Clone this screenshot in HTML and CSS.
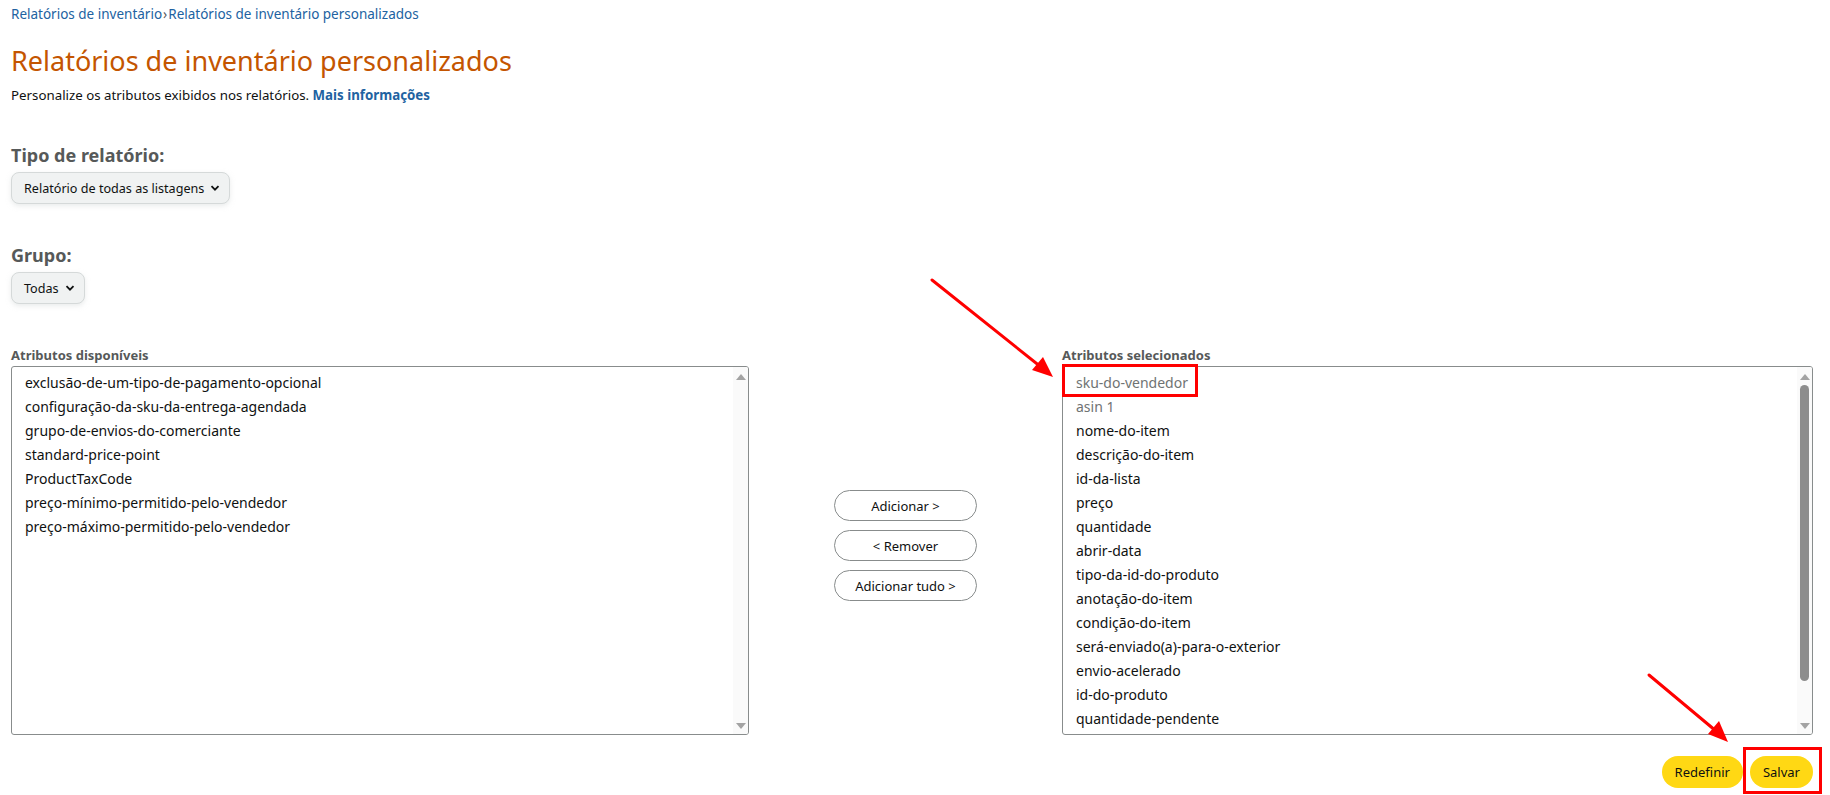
FILE: index.html
```html
<!DOCTYPE html>
<html lang="pt-BR">
<head>
<meta charset="utf-8">
<title>Relatórios de inventário personalizados</title>
<link rel="stylesheet" href="styles.css">
</head>
<body>
<div class="page">
  <nav class="crumbs"><a href="#">Relatórios de inventário</a><span class="sep">›</span><a href="#">Relatórios de inventário personalizados</a></nav>
  <h1 class="title">Relatórios de inventário personalizados</h1>
  <p class="intro">Personalize os atributos exibidos nos relatórios. <a href="#" class="more">Mais informações</a></p>

  <section class="field field-type">
    <h2 class="field-label">Tipo de relatório:</h2>
    <div class="select select-wide"><span>Relatório de todas as listagens</span><svg class="chev" viewBox="0 0 10 10"><path d="M1.5 3.2 L5 6.7 L8.5 3.2" fill="none" stroke="#0f1111" stroke-width="1.8"/></svg></div>
  </section>

  <section class="field field-group">
    <h2 class="field-label">Grupo:</h2>
    <div class="select"><span>Todas</span><svg class="chev" viewBox="0 0 10 10"><path d="M1.5 3.2 L5 6.7 L8.5 3.2" fill="none" stroke="#0f1111" stroke-width="1.8"/></svg></div>
  </section>

  <div class="lists">
    <div class="col">
      <div class="list-label">Atributos disponíveis</div>
      <div class="listbox">
        <ul class="items">
          <li>exclusão-de-um-tipo-de-pagamento-opcional</li>
          <li>configuração-da-sku-da-entrega-agendada</li>
          <li>grupo-de-envios-do-comerciante</li>
          <li>standard-price-point</li>
          <li>ProductTaxCode</li>
          <li>preço-mínimo-permitido-pelo-vendedor</li>
          <li>preço-máximo-permitido-pelo-vendedor</li>
        </ul>
        <div class="sbar">
          <span class="arr up"></span>
          <span class="track"></span>
          <span class="arr down"></span>
        </div>
      </div>
    </div>

    <div class="moves">
      <button class="move">Adicionar &gt;</button>
      <button class="move">&lt; Remover</button>
      <button class="move">Adicionar tudo &gt;</button>
    </div>

    <div class="col">
      <div class="list-label">Atributos selecionados</div>
      <div class="listbox">
        <ul class="items">
          <li class="fixed">sku-do-vendedor</li>
          <li class="fixed">asin 1</li>
          <li>nome-do-item</li>
          <li>descrição-do-item</li>
          <li>id-da-lista</li>
          <li>preço</li>
          <li>quantidade</li>
          <li>abrir-data</li>
          <li>tipo-da-id-do-produto</li>
          <li>anotação-do-item</li>
          <li>condição-do-item</li>
          <li>será-enviado(a)-para-o-exterior</li>
          <li>envio-acelerado</li>
          <li>id-do-produto</li>
          <li>quantidade-pendente</li>
        </ul>
        <div class="sbar">
          <span class="arr up"></span>
          <span class="track"><span class="thumb"></span></span>
          <span class="arr down"></span>
        </div>
      </div>
    </div>
  </div>

  <div class="actions">
    <button class="pill">Redefinir</button>
    <button class="pill">Salvar</button>
  </div>
</div>

<div class="mark mark-sku"></div>
<div class="mark mark-save"></div>
<svg class="arrows" width="1830" height="795" viewBox="0 0 1830 795">
  <g stroke="#f00" stroke-width="3" stroke-linecap="round" fill="none">
    <line x1="932" y1="280" x2="1046" y2="371"/>
    <line x1="1649" y1="675" x2="1722" y2="736"/>
  </g>
  <g fill="#f00">
    <polygon points="1053,377 1032,370 1043,357"/>
    <polygon points="1728,742 1708,734 1719,721"/>
  </g>
</svg>
</body>
</html>
```

FILE: styles.css
```css
* { box-sizing: border-box; }
html, body { margin: 0; padding: 0; background: #fff; }
body {
  font-family: "Noto Sans", "Liberation Sans", Arial, sans-serif;
  color: #0f1111;
  font-size: 13px;
  width: 1830px;
  height: 795px;
  overflow: hidden;
  position: relative;
}
a { color: #2162a1; text-decoration: none; }

.page { padding: 4px 17px 0 11px; }

.crumbs { font-size: 13.5px; line-height: 20px; color: #2162a1; }
.crumbs .sep { margin: 0 1px; color: #565959; }

.title {
  margin: 19px 0 0 0;
  font-size: 27px;
  font-weight: 400;
  line-height: 36px;
  color: #c45500;
}
.intro { margin: 6px 0 0; font-size: 13.3px; line-height: 20px; }
.intro .more { font-weight: 700; }

.field-label {
  margin: 0;
  font-size: 18px;
  font-weight: 700;
  line-height: 24px;
  color: #565959;
}
.field-type { margin-top: 38px; }
.field-group { margin-top: 39px; }

.select {
  margin-top: 5px;
  display: flex;
  width: max-content;
  align-items: center;
  gap: 6px;
  height: 32px;
  padding: 0 9px 0 12px;
  background: #f0f2f2;
  border: 1px solid #d5d9d9;
  border-radius: 8px;
  box-shadow: 0 2px 5px rgba(213,217,217,.5);
  font-size: 12.6px;
  color: #0f1111;
}
.select .chev { width: 10px; height: 10px; }

.lists {
  margin-top: 42px;
  display: grid;
  grid-template-columns: 738px 1fr 751px;
  align-items: end;
}
.list-label {
  font-size: 13px;
  font-weight: 700;
  line-height: 18px;
  color: #565959;
  margin-bottom: 2px;
}
.listbox {
  height: 369px;
  border: 1px solid #888c8c;
  border-radius: 3px;
  display: flex;
  overflow: hidden;
}
.items {
  flex: 1;
  list-style: none;
  margin: 0;
  padding: 4px 0 0 13px;
  font-size: 14px;
  line-height: 24px;
}
.items li { height: 24px; white-space: nowrap; }
.items li.fixed { color: #6f7373; }

.sbar {
  width: 15px;
  display: flex;
  flex-direction: column;
  align-items: center;
  background: #fafafa;
  padding: 7px 0 5px;
}
.arr { width: 0; height: 0; border-left: 5px solid transparent; border-right: 5px solid transparent; }
.arr.up { border-bottom: 6px solid #a3a3a3; }
.arr.down { border-top: 6px solid #a3a3a3; }
.track { flex: 1; width: 100%; display: flex; justify-content: center; padding: 5px 0 42px; }
.thumb { width: 9px; height: 100%; background: #8d8d8d; border-radius: 5px; }

.moves {
  align-self: center;
  display: flex;
  flex-direction: column;
  align-items: center;
  gap: 9px;
  padding-top: 10px;
}
.move {
  width: 143px;
  height: 31px;
  border: 1px solid #888c8c;
  border-radius: 16px;
  background: #fff;
  font-family: inherit;
  font-size: 13px;
  color: #0f1111;
  cursor: pointer;
}

.actions {
  margin-top: 21px;
  display: flex;
  justify-content: flex-end;
  gap: 7px;
}
.pill {
  height: 32px;
  padding: 0 13px;
  border: none;
  border-radius: 16px;
  background: #ffd814;
  font-family: inherit;
  font-size: 13px;
  color: #0f1111;
}

.mark { position: absolute; border: 3px solid #f00; pointer-events: none; }
.mark-sku { left: 1062px; top: 364px; width: 136px; height: 33px; }
.mark-save { left: 1743px; top: 747px; width: 79px; height: 47px; }
.arrows { position: absolute; left: 0; top: 0; pointer-events: none; }
```
